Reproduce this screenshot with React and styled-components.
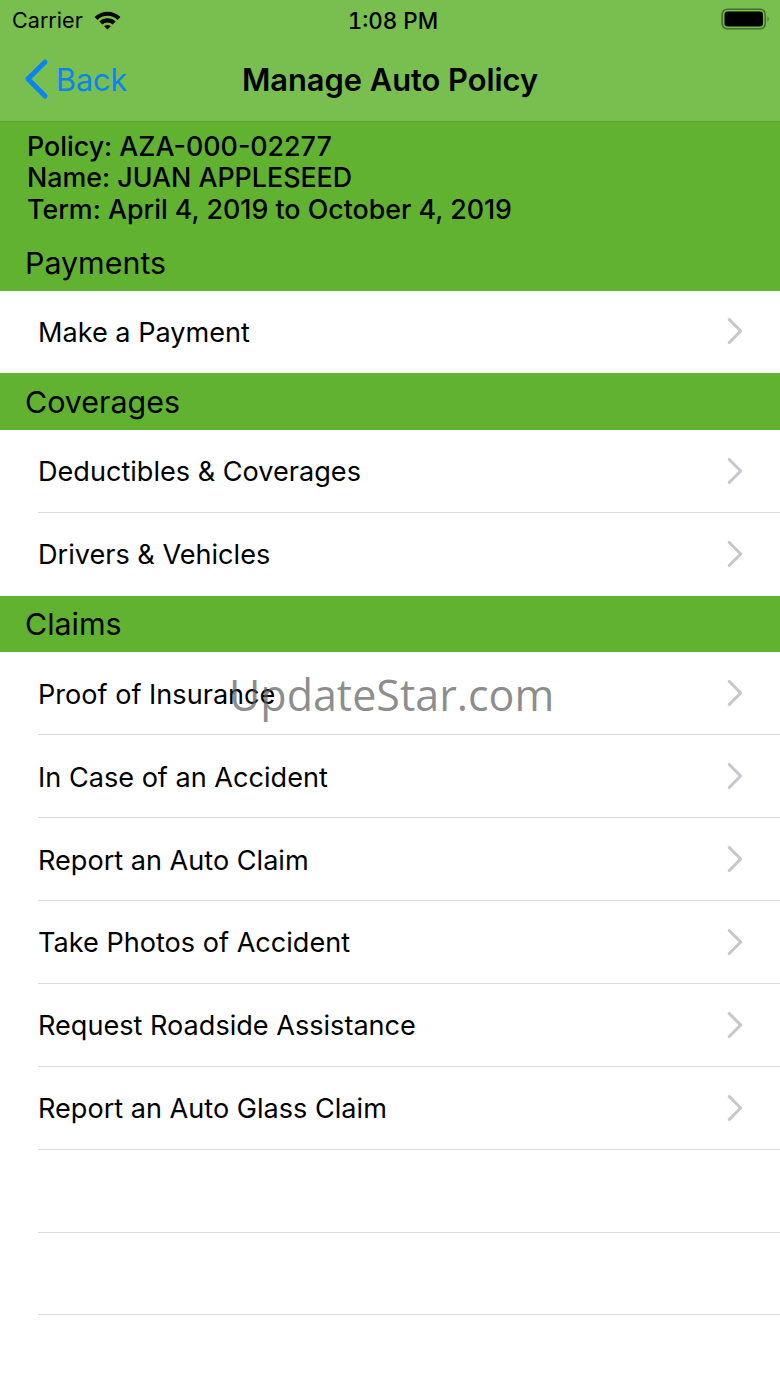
import React from 'react';
import styled, { createGlobalStyle } from 'styled-components';
import { FiChevronRight } from 'react-icons/fi';

const GlobalStyle = createGlobalStyle`
  html, body {
    margin: 0;
    padding: 0;
    background: #fff;
  }
  body {
    font-family: Inter, "Liberation Sans", sans-serif;
    color: #000;
  }
`;

const Screen = styled.div`
  position: relative;
  width: 780px;
  height: 1387px;
  overflow: hidden;
  background: #fff;
`;

const NavBar = styled.header`
  height: 121px;
  background: #79bf50;
  border-bottom: 1px solid #5aa532;
`;

const StatusBar = styled.div`
  height: 40px;
  padding: 0 12px;
  display: grid;
  grid-template-columns: 1fr auto 1fr;
  align-items: center;
  font-size: 21.6px;
`;

const StatusLeft = styled.div`
  display: flex;
  align-items: center;
  gap: 11px;
`;

const StatusRight = styled.div`
  display: flex;
  justify-content: flex-end;
  margin-right: -3px;
`;

const Time = styled.div`
  margin-left: 6px;
  font-size: 22.4px;
  font-weight: 500;
  font-variant-numeric: tabular-nums;
`;

const NavRow = styled.div`
  position: relative;
  height: 78px;
  display: flex;
  align-items: center;
  justify-content: center;
`;

const BackLink = styled.a`
  position: absolute;
  left: 23px;
  top: 18px;
  display: flex;
  align-items: center;
  gap: 7px;
  color: #0a84f0;
  font-size: 30.5px;
`;

const NavTitle = styled.h1`
  margin: 0;
  font-size: 30.8px;
  font-weight: 600;
`;

const PolicyInfo = styled.div`
  background: #62b231;
  padding: 9px 27px 0;
  height: 102px;
  box-sizing: border-box;
  font-size: 26.8px;
  font-weight: 500;
  line-height: 31.3px;
`;

const SectionHeader = styled.div`
  background: #62b231;
  height: ${(p) => p.$height}px;
  box-sizing: border-box;
  padding: ${(p) => p.$offset}px 0 0 25px;
  display: flex;
  align-items: center;
  font-size: 30.4px;
`;

const Row = styled.div`
  height: 82.9px;
  margin-left: 38px;
  padding-right: 37px;
  box-sizing: border-box;
  display: flex;
  align-items: center;
  justify-content: space-between;
  font-size: 27.1px;
  border-bottom: 1px solid ${(p) => (p.$last ? 'transparent' : '#dcdcdc')};
`;

const RowLabel = styled.span`
  padding-top: 2px;
`;

const Chevron = styled(FiChevronRight)`
  width: 46px;
  height: 46px;
  margin-right: -14.5px;
  color: #c7c7cc;
  stroke-width: 1.6;
`;

const Watermark = styled.div`
  position: absolute;
  left: 229px;
  top: 665px;
  font-family: "Open Sans", sans-serif;
  font-size: 43px;
  color: rgba(90, 90, 90, 0.7);
  pointer-events: none;
`;

function Wifi() {
  return (
    <svg width="27" height="20" viewBox="0 0 26 20" preserveAspectRatio="none">
      <path d="M0.6 7 A17.5 17.5 0 0 1 25.4 7 L22.6 10 A13.2 13.2 0 0 0 3.4 10 Z" fill="#000" />
      <path d="M5.2 11.6 A11 11 0 0 1 20.8 11.6 L18 14.5 A7 7 0 0 0 8 14.5 Z" fill="#000" />
      <path d="M9.8 16.2 A4.6 4.6 0 0 1 16.2 16.2 L13 19.6 Z" fill="#000" />
    </svg>
  );
}

function Battery() {
  return (
    <svg width="50" height="24" viewBox="0 0 50 24">
      <rect x="1.2" y="1.2" width="43" height="19.6" rx="5" fill="none" stroke="#3f7328" strokeWidth="1.6" />
      <rect x="3.5" y="3.5" width="38.5" height="15" rx="3" fill="#000" />
      <path d="M46.5 8.5 C48 9.1 48 13.1 46.5 13.7 Z" fill="#3f7328" />
    </svg>
  );
}

function BackChevron() {
  return (
    <svg width="26" height="42" viewBox="0 0 26 42">
      <path d="M22 4 L5 21 L22 38" fill="none" stroke="#0a84f0" strokeWidth="5" strokeLinecap="round" strokeLinejoin="round" />
    </svg>
  );
}

const sections = [
  { title: 'Coverages', rows: ['Deductibles & Coverages', 'Drivers & Vehicles'] },
  {
    title: 'Claims',
    rows: [
      'Proof of Insurance',
      'In Case of an Accident',
      'Report an Auto Claim',
      'Take Photos of Accident',
      'Request Roadside Assistance',
      'Report an Auto Glass Claim',
    ],
  },
];

function ListRow({ label, last }) {
  return (
    <Row $last={last}>
      <RowLabel>{label}</RowLabel>
      <Chevron />
    </Row>
  );
}

export default function App() {
  return (
    <Screen>
      <GlobalStyle />
      <NavBar>
        <StatusBar>
          <StatusLeft>
            <span>Carrier</span>
            <Wifi />
          </StatusLeft>
          <Time>1:08 PM</Time>
          <StatusRight>
            <Battery />
          </StatusRight>
        </StatusBar>
        <NavRow>
          <BackLink>
            <BackChevron />
            Back
          </BackLink>
          <NavTitle>Manage Auto Policy</NavTitle>
        </NavRow>
      </NavBar>
      <PolicyInfo>
        <div>Policy: AZA-000-02277</div>
        <div>Name: JUAN APPLESEED</div>
        <div>Term: April 4, 2019 to October 4, 2019</div>
      </PolicyInfo>
      <SectionHeader $height={66.5} $offset={12}>Payments</SectionHeader>
      <ListRow label="Make a Payment" last />
      {sections.map((s, i) => (
        <section key={s.title}>
          <SectionHeader $height={56.6} $offset={0}>{s.title}</SectionHeader>
          {s.rows.map((r, j) => (
            <ListRow key={r} label={r} last={i === 0 && j === s.rows.length - 1} />
          ))}
        </section>
      ))}
      <Row />
      <Row />
      <Watermark>UpdateStar.com</Watermark>
    </Screen>
  );
}
